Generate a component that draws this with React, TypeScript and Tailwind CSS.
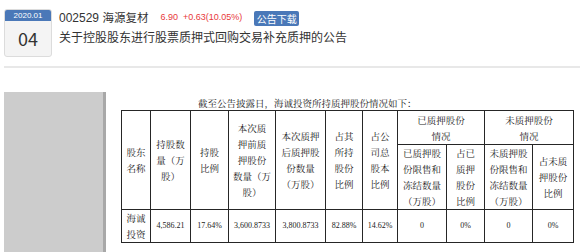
import React from "react";

const sans = { fontFamily: '"Noto Sans CJK SC", "Noto Sans", sans-serif' };
const latin = { fontFamily: '"Liberation Sans", "Noto Sans CJK SC", sans-serif' };
const serif = { fontFamily: '"Noto Serif CJK SC", "Liberation Serif", "Noto Sans CJK SC", serif' };
const num = { fontFamily: '"Liberation Serif", serif' };

const td = "border border-[#262626] p-0 text-center align-middle whitespace-nowrap";

export default function App() {
  return (
    <div className="w-[580px] h-[252px] overflow-hidden bg-white text-[#333]" style={sans}>
      {/* header */}
      <div className="flex pt-[9px] pl-[4px]">
        <div className="w-[48px] h-[48px] rounded-[3px] border border-[#dcdcdc] bg-[#f4f4f4] overflow-hidden flex flex-col">
          <div className="h-[11px] bg-[#4a78b8] text-white text-[8px] leading-[11px] text-center" style={latin}>2020.01</div>
          <div className="flex-1 flex items-center justify-center text-[18px] text-[#333] leading-none pb-[2px]">04</div>
        </div>
        <div className="ml-[7px] flex flex-col">
          <div className="flex items-center h-[20px] mt-[-1px]" style={latin}>
            <span className="shrink-0 whitespace-nowrap text-[12px] text-[#333]">
              002529 <span className="text-[11.5px]" style={sans}>海源复材</span>
            </span>
            <span className="ml-[12px] text-[9px] text-[#e8393b]">6.90</span>
            <span className="ml-[5px] text-[9px] text-[#e8393b]">+0.63(10.05%)</span>
            <span className="ml-[12px] w-[45px] h-[15px] rounded-[2px] bg-[#4a78b8] text-white text-[10px] leading-[15px] text-center" style={sans}>公告下载</span>
          </div>
          <div className="text-[12px] leading-[16px] mt-[1px] text-[#333]">关于控股股东进行股票质押式回购交易补充质押的公告</div>
        </div>
      </div>
      <div className="ml-[4px] mt-[9px] h-[2px] bg-[#e8e8e8]" />
      {/* body */}
      <div className="flex mt-[24px]">
        <div className="ml-[4px] w-[102px] h-[200px] bg-[#cccccc] border-r-[3px] border-[#a8a8a8]" />
        <div className="flex-1 pt-[4px] text-[#1a1a1a]" style={serif}>
          <div className="pl-[92px] text-[9.5px] leading-[14px] whitespace-nowrap">截至公告披露日，海诚投资所持质押股份情况如下：</div>
          <table className="ml-[15px] table-fixed border-collapse w-[452px] text-[9.5px] leading-[16px]">
            <colgroup>
              <col className="w-[29px]" />
              <col className="w-[40px]" />
              <col className="w-[38px]" />
              <col className="w-[47px]" />
              <col className="w-[50px]" />
              <col className="w-[37px]" />
              <col className="w-[35px]" />
              <col className="w-[49px]" />
              <col className="w-[38px]" />
              <col className="w-[48px]" />
              <col className="w-[41px]" />
            </colgroup>
            <tbody>
              <tr className="h-[34px]">
                <td className={td} rowSpan={2}>股东<br />名称</td>
                <td className={td} rowSpan={2}>持股数<br />量（万<br />股）</td>
                <td className={td} rowSpan={2}>持股<br />比例</td>
                <td className={td} rowSpan={2}>本次质<br />押前质<br />押股份<br />数量（万<br />股）</td>
                <td className={td} rowSpan={2}>本次质押<br />后质押股<br />份数量<br />（万股）</td>
                <td className={td} rowSpan={2}>占其<br />所持<br />股份<br />比例</td>
                <td className={td} rowSpan={2}>占公<br />司总<br />股本<br />比例</td>
                <td className={td} colSpan={2}>已质押股份<br />情况</td>
                <td className={td} colSpan={2}>未质押股份<br />情况</td>
              </tr>
              <tr className="h-[65px]">
                <td className={td}>已质押股<br />份限售和<br />冻结数量<br />（万股）</td>
                <td className={td}>占已<br />质押<br />股份<br />比例</td>
                <td className={td}>未质押股<br />份限售和<br />冻结数量<br />（万股）</td>
                <td className={td}>占未质<br />押股份<br />比例</td>
              </tr>
              <tr className="h-[32px]">
                <td className={td}>海诚<br />投资</td>
                <td className={`${td} text-[8px]`} style={num}>4,586.21</td>
                <td className={`${td} text-[8px]`} style={num}>17.64%</td>
                <td className={`${td} text-[8px]`} style={num}>3,600.8733</td>
                <td className={`${td} text-[8px]`} style={num}>3,800.8733</td>
                <td className={`${td} text-[8px]`} style={num}>82.88%</td>
                <td className={`${td} text-[8px]`} style={num}>14.62%</td>
                <td className={`${td} text-[8px]`} style={num}>0</td>
                <td className={`${td} text-[8px]`} style={num}>0%</td>
                <td className={`${td} text-[8px]`} style={num}>0</td>
                <td className={`${td} text-[8px]`} style={num}>0%</td>
              </tr>
            </tbody>
          </table>
        </div>
      </div>
    </div>
  );
}
